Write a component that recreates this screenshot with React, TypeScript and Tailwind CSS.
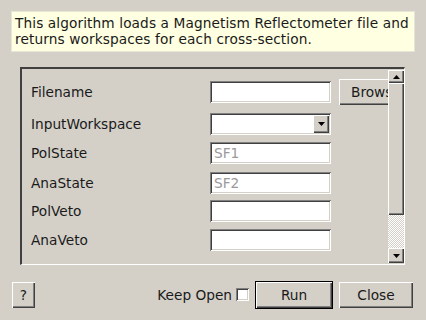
import React from "react";

const sunken =
  "shadow-[inset_1px_1px_0_#808080,inset_-1px_-1px_0_#ffffff,inset_2px_2px_0_#404040,inset_-2px_-2px_0_#d4d0c8]";
const raised =
  "shadow-[inset_1px_1px_0_#ffffff,inset_-1px_-1px_0_#404040,inset_-2px_-2px_0_#808080]";

function Row({
  label,
  children,
  className,
}: {
  label: string;
  children: React.ReactNode;
  className: string;
}) {
  return (
    <div className={"flex items-center shrink-0 " + className}>
      <div className="w-[188px] shrink-0 pl-[9px] pt-[2px] text-[13.7px] text-[#1a1a1a] leading-none">
        {label}
      </div>
      {children}
    </div>
  );
}

function Input({ placeholder }: { placeholder?: string }) {
  return (
    <div
      className={
        "w-[121px] h-[22px] shrink-0 bg-white flex items-center pl-[4px] text-[13.7px] text-[#9a9a9a] " +
        sunken
      }
    >
      {placeholder}
    </div>
  );
}

function Arrow({ down }: { down?: boolean }) {
  return (
    <svg width="7" height="4" viewBox="0 0 7 4">
      {down ? (
        <polygon points="0,0 7,0 3.5,4" fill="#000" />
      ) : (
        <polygon points="0,4 7,4 3.5,0" fill="#000" />
      )}
    </svg>
  );
}

export default function App() {
  return (
    <div
      className="w-[426px] h-[320px] bg-[#d4d0c8] flex flex-col overflow-hidden"
      style={{ fontFamily: '"DejaVu Sans", sans-serif' }}
    >
      <div className="mx-[11px] mt-[11px] h-[41px] bg-[#ffffe1] border border-[#e6e6d8] px-[3px] pt-[3px] text-[13.7px] leading-[16px] text-[#1a1a1a] tracking-[0.1px] whitespace-nowrap overflow-hidden">
        This algorithm loads a Magnetism Reflectometer file and
        <br />
        returns workspaces for each cross-section.
      </div>

      <div className="ml-[20px] mt-[15px] w-[385px] h-[198px] flex border-t-2 border-l-2 border-t-[#404040] border-l-[#404040] border-b border-r border-b-white border-r-white">
        <div className="flex-1 min-w-0 flex flex-col overflow-hidden">
          <Row label="Filename" className="mt-[10px] h-[26px]">
            <Input />
            <div
              className={
                "ml-[8px] w-[80px] h-[26px] shrink-0 flex items-center pl-[12px] text-[13.7px] text-[#1a1a1a] " +
                raised
              }
            >
              Browse
            </div>
          </Row>
          <Row label="InputWorkspace" className="mt-[8px] h-[22px]">
            <div className={"w-[121px] h-[22px] shrink-0 bg-white relative " + sunken}>
              <div
                className={
                  "absolute right-[2px] top-[2px] w-[16px] h-[18px] bg-[#d4d0c8] flex items-center justify-center " +
                  raised
                }
              >
                <Arrow down />
              </div>
            </div>
          </Row>
          <Row label="PolState" className="mt-[7px] h-[22px]">
            <Input placeholder="SF1" />
          </Row>
          <Row label="AnaState" className="mt-[8px] h-[22px]">
            <Input placeholder="SF2" />
          </Row>
          <Row label="PolVeto" className="mt-[6px] h-[22px]">
            <Input />
          </Row>
          <Row label="AnaVeto" className="mt-[7px] h-[22px]">
            <Input />
          </Row>
          <div className="mt-[13px] h-[14px] flex items-start shrink-0 pl-[188px]">
            <div className={"w-[13px] h-[13px] shrink-0 bg-white " + sunken} />
            <div className="ml-[4px] text-[13.7px] leading-none text-[#1a1a1a] whitespace-nowrap">
              Take the veto
            </div>
          </div>
        </div>
        <div className="w-[16px] flex flex-col shrink-0 mt-[1px] mb-[1px]">
          <div className={"h-[13px] bg-[#d4d0c8] flex items-center justify-center " + raised}>
            <Arrow />
          </div>
          <div className={"h-[132px] bg-[#d4d0c8] " + raised} />
          <div
            className="flex-1"
            style={{
              backgroundColor: "#e8e6e2",
              backgroundImage: "repeating-conic-gradient(#ffffff 0% 25%, #d4d0c8 0% 50%)",
              backgroundSize: "2px 2px",
            }}
          />
          <div className={"h-[15px] bg-[#d4d0c8] flex items-center justify-center " + raised}>
            <Arrow down />
          </div>
        </div>
      </div>

      <div className="mt-[16px] flex items-center h-[28px]">
        <div
          className={
            "ml-[12px] w-[23px] h-[26px] flex items-center justify-center text-[13.7px] text-[#1a1a1a] " +
            raised
          }
        >
          ?
        </div>
        <div className="ml-auto flex items-center text-[13.7px] text-[#1a1a1a]">
          Keep Open
          <div className={"ml-[4px] w-[13px] h-[13px] bg-white " + sunken} />
        </div>
        <div className="ml-[6px] w-[78px] h-[28px] border border-black flex">
          <div
            className={
              "flex-1 flex items-center justify-center text-[13.7px] text-[#1a1a1a] " + raised
            }
          >
            Run
          </div>
        </div>
        <div
          className={
            "ml-[6px] mr-[13px] w-[74px] h-[26px] flex items-center justify-center text-[13.7px] text-[#1a1a1a] " +
            raised
          }
        >
          Close
        </div>
      </div>
    </div>
  );
}
